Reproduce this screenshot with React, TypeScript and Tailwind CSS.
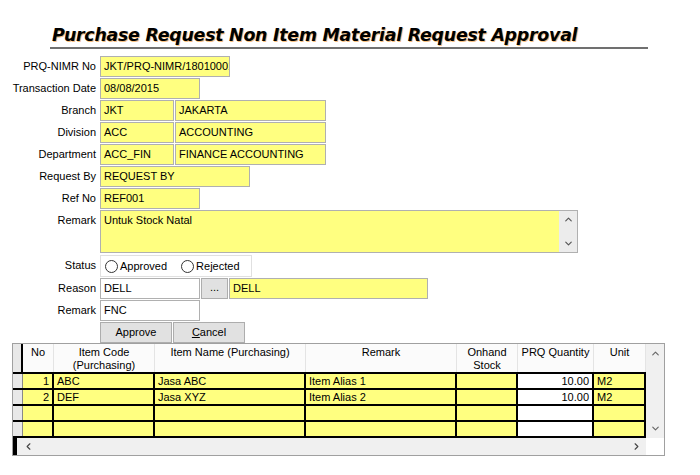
import { ChevronUp, ChevronDown, ChevronLeft, ChevronRight } from "lucide-react";

const yellow = "bg-[#ffff80]";

const Label = ({ text }: { text: string }) => (
  <div className="w-[97px] pr-[1px] text-right shrink-0 leading-[21px]">{text}</div>
);

const Box = ({ value, w, white }: { value: string; w: string; white?: boolean }) => (
  <div
    className={`${w} h-[21px] border border-[#b0b0b0] ${white ? "bg-white" : yellow} px-[3px] leading-[19px] whitespace-nowrap overflow-hidden shrink-0`}
  >
    {value}
  </div>
);

const Row = ({ label, children }: { label: string; children: React.ReactNode }) => (
  <div className="flex items-start h-[22px]">
    <Label text={label} />
    <div className="flex gap-[1px] ml-[3px]">{children}</div>
  </div>
);

const Radio = ({ text }: { text: string }) => (
  <div className="flex items-center gap-[2px]">
    <span className="w-[13px] h-[13px] rounded-full border border-[#333] bg-white" />
    <span>{text}</span>
  </div>
);

const cols = [
  { name: "No", w: "w-[31px]", align: "text-right" },
  { name: "Item Code (Purchasing)", w: "w-[101px]", align: "text-left" },
  { name: "Item Name (Purchasing)", w: "w-[151px]", align: "text-left" },
  { name: "Remark", w: "w-[151px]", align: "text-left" },
  { name: "Onhand Stock", w: "w-[61px]", align: "text-left" },
  { name: "PRQ Quantity", w: "w-[76px]", align: "text-right" },
  { name: "Unit", w: "w-[52px]", align: "text-left" },
];

const rows = [
  ["1", "ABC", "Jasa ABC", "Item Alias 1", "", "10.00", "M2"],
  ["2", "DEF", "Jasa XYZ", "Item Alias 2", "", "10.00", "M2"],
  ["", "", "", "", "", "", ""],
  ["", "", "", "", "", "", ""],
];

export default function App() {
  return (
    <div className="w-[700px] h-[475px] bg-white text-[11px] text-black font-['Liberation_Sans',Arial,sans-serif] overflow-hidden">
      <div className="pt-[24px] pl-[50px]">
        <h1 className="w-[598px] border-b-2 border-[#707070] pl-[2px] pb-[1px] text-[17.4px] leading-[22px] font-bold italic font-['DejaVu_Sans',Verdana,sans-serif] tracking-[-0.25px] [text-shadow:1px_1px_0_#f8c080]">
          Purchase Request Non Item Material Request Approval
        </h1>
      </div>

      <div className="mt-[7px]">
        <Row label="PRQ-NIMR No">
          <Box value="JKT/PRQ-NIMR/18010001" w="w-[130px]" />
        </Row>
        <Row label="Transaction Date">
          <Box value="08/08/2015" w="w-[100px]" />
        </Row>
        <Row label="Branch">
          <Box value="JKT" w="w-[74px]" />
          <Box value="JAKARTA" w="w-[151px]" />
        </Row>
        <Row label="Division">
          <Box value="ACC" w="w-[74px]" />
          <Box value="ACCOUNTING" w="w-[151px]" />
        </Row>
        <Row label="Department">
          <Box value="ACC_FIN" w="w-[74px]" />
          <Box value="FINANCE ACCOUNTING" w="w-[151px]" />
        </Row>
        <Row label="Request By">
          <Box value="REQUEST BY" w="w-[150px]" />
        </Row>
        <Row label="Ref No">
          <Box value="REF001" w="w-[100px]" />
        </Row>
        <div className="flex items-start h-[45px]">
          <Label text="Remark" />
          <div className={`ml-[3px] w-[478px] h-[43px] border border-[#b0b0b0] ${yellow} flex`}>
            <div className="flex-1 px-[3px] leading-[19px]">Untuk Stock Natal</div>
            <div className="w-[18px] bg-[#ececec] flex flex-col items-center justify-between py-[3px] text-[#555]">
              <ChevronUp size={11} strokeWidth={2.5} />
              <ChevronDown size={11} strokeWidth={2.5} />
            </div>
          </div>
        </div>
        <div className="flex items-start h-[23px]">
          <Label text="Status" />
          <div className="ml-[3px] w-[152px] h-[22px] border border-[#e0e0e0] bg-white flex items-center gap-[14px] pl-[4px]">
            <Radio text="Approved" />
            <Radio text="Rejected" />
          </div>
        </div>
        <Row label="Reason">
          <Box value="DELL" w="w-[100px]" white />
          <div className="w-[27px] h-[21px] border border-[#adadad] bg-[#e1e1e1] text-center leading-[17px]">...</div>
          <Box value="DELL" w="w-[199px]" />
        </Row>
        <Row label="Remark">
          <Box value="FNC" w="w-[100px]" white />
        </Row>
        <div className="flex h-[21px]">
          <div className="w-[97px]" />
          <div className="flex gap-[1px] ml-[3px]">
            <button className="w-[72px] h-[21px] border border-[#adadad] bg-[#e1e1e1] leading-[19px]">Approve</button>
            <button className="w-[72px] h-[21px] border border-[#adadad] bg-[#e1e1e1] leading-[19px]">
              <span className="underline">C</span>ancel
            </button>
          </div>
        </div>
      </div>

      <div className="ml-[12px] w-[653px] h-[113px] border border-[#a0a0a0] flex flex-col">
        <div className="flex flex-1">
          <div className="flex flex-col">
            <div className="flex h-[30px] bg-[#fbfbfb] border-b-2 border-black">
              <div className="w-[10px] bg-[#e8e8e8] border-r-2 border-black" />
              {cols.map((c) => (
                <div key={c.name} className={`${c.w} border-r border-[#e4e4e4] text-center leading-[13px] pt-[2px] px-[1px]`}>
                  {c.name}
                </div>
              ))}
            </div>
            {rows.map((r, i) => (
              <div key={i} className="flex h-[16px] border-b-2 border-black">
                <div className="w-[10px] bg-[#e8e8e8] border-r border-[#888]" />
                {r.map((v, j) => (
                  <div
                    key={j}
                    className={`${cols[j].w} ${j === 5 ? "bg-white" : yellow} ${cols[j].align} border-r-2 border-black px-[3px] leading-[14px] whitespace-nowrap overflow-hidden`}
                  >
                    {v}
                  </div>
                ))}
              </div>
            ))}
          </div>
          <div className="flex-1 bg-[#f0f0f0] flex flex-col items-center justify-between py-[4px] text-[#666]">
            <ChevronUp size={11} strokeWidth={2.5} />
            <ChevronDown size={11} strokeWidth={2.5} />
          </div>
        </div>
        <div className="flex h-[17px]">
          <div className="flex-1 bg-[#f0f0f0] flex items-center justify-between pr-[4px] border-l-4 border-black text-[#444]">
            <ChevronLeft size={11} strokeWidth={2.5} className="ml-[6px]" />
            <ChevronRight size={11} strokeWidth={2.5} />
          </div>
          <div className="w-[18px] bg-white" />
        </div>
      </div>
    </div>
  );
}
